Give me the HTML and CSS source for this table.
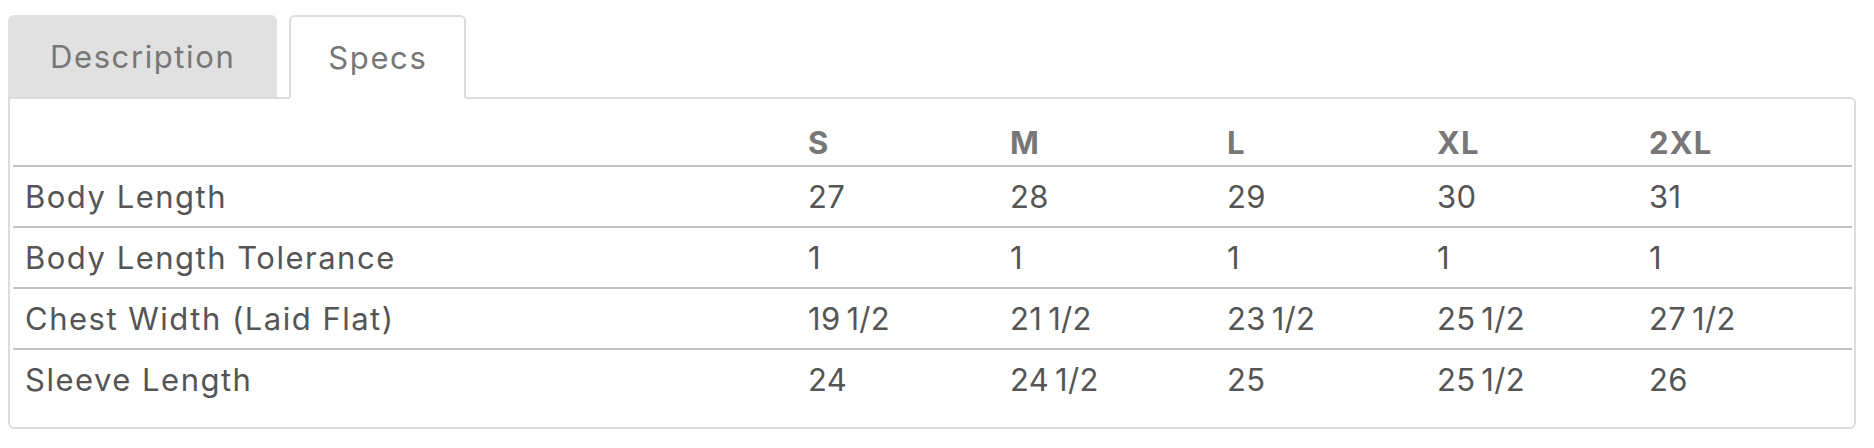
FILE: index.html
```html
<!DOCTYPE html>
<html lang="en">
<head>
<meta charset="utf-8">
<title>Specs</title>
<link rel="stylesheet" href="styles.css">
</head>
<body>
<div class="wrap">
  <div class="tabs">
    <div class="tab">Description</div>
    <div class="tab active">Specs</div>
  </div>
  <div class="panel">
    <table class="specs">
      <colgroup>
        <col class="c-name"><col class="c-s"><col class="c-m"><col class="c-l"><col class="c-xl"><col class="c-2xl">
      </colgroup>
      <thead>
        <tr><th></th><th>S</th><th>M</th><th>L</th><th>XL</th><th>2XL</th></tr>
      </thead>
      <tbody>
        <tr><td class="label">Body Length</td><td>27</td><td>28</td><td>29</td><td>30</td><td>31</td></tr>
        <tr><td class="label">Body Length Tolerance</td><td>1</td><td>1</td><td>1</td><td>1</td><td>1</td></tr>
        <tr><td class="label">Chest Width (Laid Flat)</td><td>19 1/2</td><td>21 1/2</td><td>23 1/2</td><td>25 1/2</td><td>27 1/2</td></tr>
        <tr><td class="label">Sleeve Length</td><td>24</td><td>24 1/2</td><td>25</td><td>25 1/2</td><td>26</td></tr>
      </tbody>
    </table>
  </div>
</div>
</body>
</html>
```
FILE: styles.css
```css
* { box-sizing: border-box; }
html, body { margin: 0; padding: 0; background: #fff; }
body { font-family: Inter, "Liberation Sans", sans-serif; }

.wrap {
  padding: 15px 18px 0 8px;
}

.tabs {
  display: flex;
  gap: 12px;
  align-items: flex-end;
}

.tab {
  height: 82px;
  padding: 0 42px;
  display: flex;
  align-items: center;
  font-size: 31px;
  color: #777;
  background: #e1e1e1;
  border-radius: 6px 6px 0 0;
  letter-spacing: 1.6px;
}

.tab.active {
  background: #fff;
  border: 2px solid #dcdcdc;
  border-bottom: 2px solid #fff;
  margin-bottom: -2px;
  height: 84px;
  position: relative;
  z-index: 1;
  padding: 0 37px;
}

.panel {
  border: 2px solid #dcdcdc;
  border-radius: 0 6px 6px 6px;
  padding: 0 2px 18px 3px;
}

.specs {
  width: 100%;
  table-layout: fixed;
  border-collapse: separate;
  border-spacing: 0;
  font-size: 31px;
  color: #555;
  letter-spacing: 0.3px;
  word-spacing: -3px;
}

.c-name { width: 783px; }
.c-s { width: 202px; }
.c-m { width: 217px; }
.c-l { width: 210px; }
.c-xl { width: 212px; }
.c-2xl { width: auto; }

.specs th {
  height: 68px;
  padding: 0 12px 2px;
  vertical-align: bottom;
  text-align: left;
  line-height: 40px;
  font-weight: 700;
  color: #777;
  letter-spacing: 1.2px;
  border-bottom: 2px solid #c2c2c2;
}

.specs td {
  height: 61px;
  padding: 0 12px;
  line-height: 59px;
  vertical-align: middle;
  white-space: nowrap;
  border-top: 2px solid #c2c2c2;
}

.specs td.label {
  letter-spacing: 1.5px;
  word-spacing: 0;
}

.specs tbody tr:first-child td { border-top: 0; height: 59px; }
```
